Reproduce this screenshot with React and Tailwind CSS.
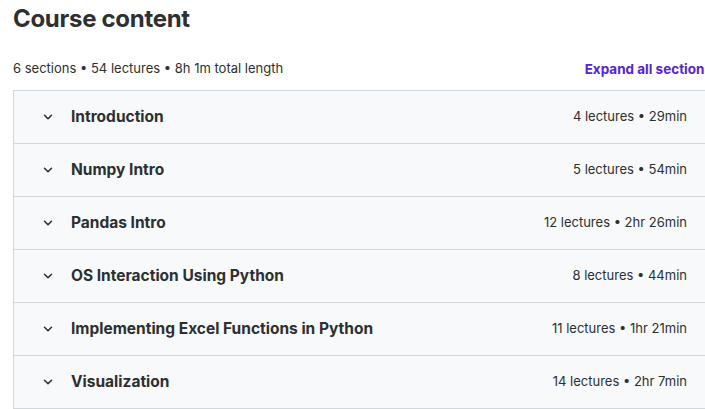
import React from "react";

const sections = [
  { title: "Introduction", meta: "4 lectures • 29min" },
  { title: "Numpy Intro", meta: "5 lectures • 54min" },
  { title: "Pandas Intro", meta: "12 lectures • 2hr 26min" },
  { title: "OS Interaction Using Python", meta: "8 lectures • 44min" },
  { title: "Implementing Excel Functions in Python", meta: "11 lectures • 1hr 21min" },
  { title: "Visualization", meta: "14 lectures • 2hr 7min" },
];

function Chevron() {
  return (
    <svg width="14" height="14" viewBox="0 0 24 24" fill="none" stroke="#2d2f31" strokeWidth="2.6" strokeLinecap="round" strokeLinejoin="round">
      <path d="M6 9l6 6 6-6" />
    </svg>
  );
}

export default function App() {
  return (
    <div className="w-[705px] h-[409px] overflow-hidden bg-white text-[#2d2f31]" style={{ fontFamily: "Inter, 'Noto Sans', sans-serif" }}>
      <div className="w-[699px] ml-[13px]">
        <h2 className="text-[24px] font-bold leading-[38px] tracking-[-0.3px]">Course content</h2>
        <div className="mt-[12px] flex items-center justify-between h-[38px]">
          <span className="text-[13px]">6 sections • 54 lectures • 8h 1m total length</span>
          <span className="text-[13.5px] font-bold text-[#5624d0]">Expand all sections</span>
        </div>
        <div className="border border-[#d1d7dc] border-b-0 mt-[2px]">
          {sections.map((s) => (
            <div key={s.title} className="h-[53px] flex items-center bg-[#f7f9fa] border-b border-[#d1d7dc] pl-[27px] pr-[24px]">
              <Chevron />
              <span className="ml-[16px] text-[15.5px] font-bold">{s.title}</span>
              <span className="ml-auto text-[13px]">{s.meta}</span>
            </div>
          ))}
        </div>
      </div>
    </div>
  );
}
